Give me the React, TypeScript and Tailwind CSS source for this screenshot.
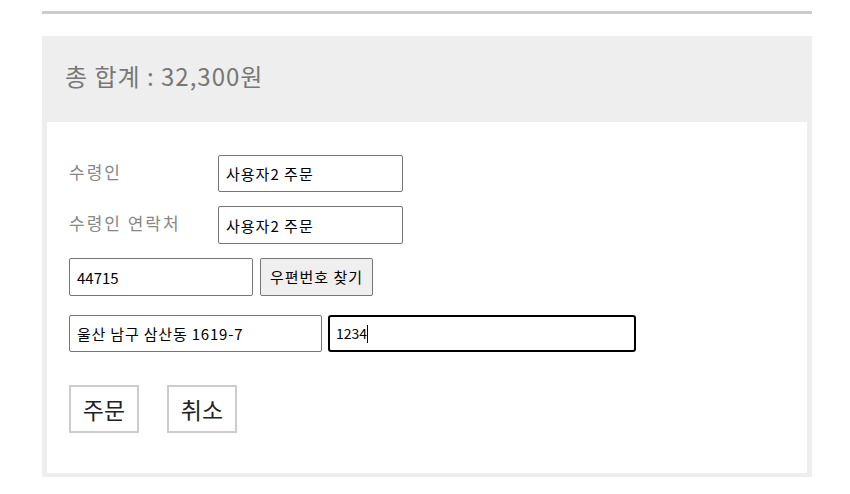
import React from "react";

const font = { fontFamily: '"Noto Sans CJK KR", "Noto Sans", sans-serif' };

function Field({ value, className }: { value: string; className: string }) {
  return (
    <input
      readOnly
      value={value}
      className={`border border-[#767676] rounded-[2px] px-[7px] text-[15px] text-black bg-white outline-none ${className}`}
    />
  );
}

export default function App() {
  return (
    <div className="w-[850px] h-[494px] bg-white overflow-hidden" style={font}>
      <div className="pt-[11px] pl-[42px] w-[812px]">
        <div className="h-[3px] bg-[#cccccc]" />
        <div className="mt-[22px] bg-[#eeeeee] px-[5px] pb-[4px]">
          <div className="h-[86px] pt-[25px] pl-[18px]">
            <h3 className="text-[24px] tracking-[1px] text-[#777777] leading-[30px]">총 합계 : 32,300원</h3>
          </div>
          <div className="bg-white pt-[33px] pb-[40px] pl-[22px] flex flex-col">
            <div className="flex items-start h-[37px]">
              <label className="w-[149px] text-[17px] tracking-[2px] text-[#888888] leading-none mt-[8px]">수령인</label>
              <Field value="사용자2 주문" className="w-[185px] h-[37px] tracking-[1px]" />
            </div>
            <div className="flex items-start h-[38px] mt-[14px]">
              <label className="w-[149px] text-[17px] tracking-[2px] text-[#888888] leading-none mt-[8px]">수령인 연락처</label>
              <Field value="사용자2 주문" className="w-[185px] h-[38px] tracking-[1px]" />
            </div>
            <div className="flex items-center gap-[7px] mt-[14px] h-[38px]">
              <Field value="44715" className="w-[184px] h-[38px]" />
              <button className="h-[38px] w-[113px] bg-[#efefef] border border-[#767676] rounded-[2px] text-[15px] tracking-[1px] text-black">
                우편번호 찾기
              </button>
            </div>
            <div className="flex items-center gap-[6px] mt-[19px] h-[37px]">
              <Field value="울산 남구 삼산동 1619-7" className="w-[253px] h-[37px] tracking-[0.8px]" />
              <div className="h-[37px] w-[308px] border-2 border-black rounded-[3px] px-[6px] flex items-center text-[14px] text-black">
                <span>1234</span>
                <span className="inline-block w-px h-[18px] bg-black" />
              </div>
            </div>
            <div className="flex gap-[28px] mt-[33px]">
              <button className="w-[70px] h-[48px] border-2 border-[#cccccc] bg-white text-[23px] text-[#222222]">주문</button>
              <button className="w-[70px] h-[48px] border-2 border-[#cccccc] bg-white text-[23px] text-[#222222]">취소</button>
            </div>
          </div>
        </div>
      </div>
    </div>
  );
}
